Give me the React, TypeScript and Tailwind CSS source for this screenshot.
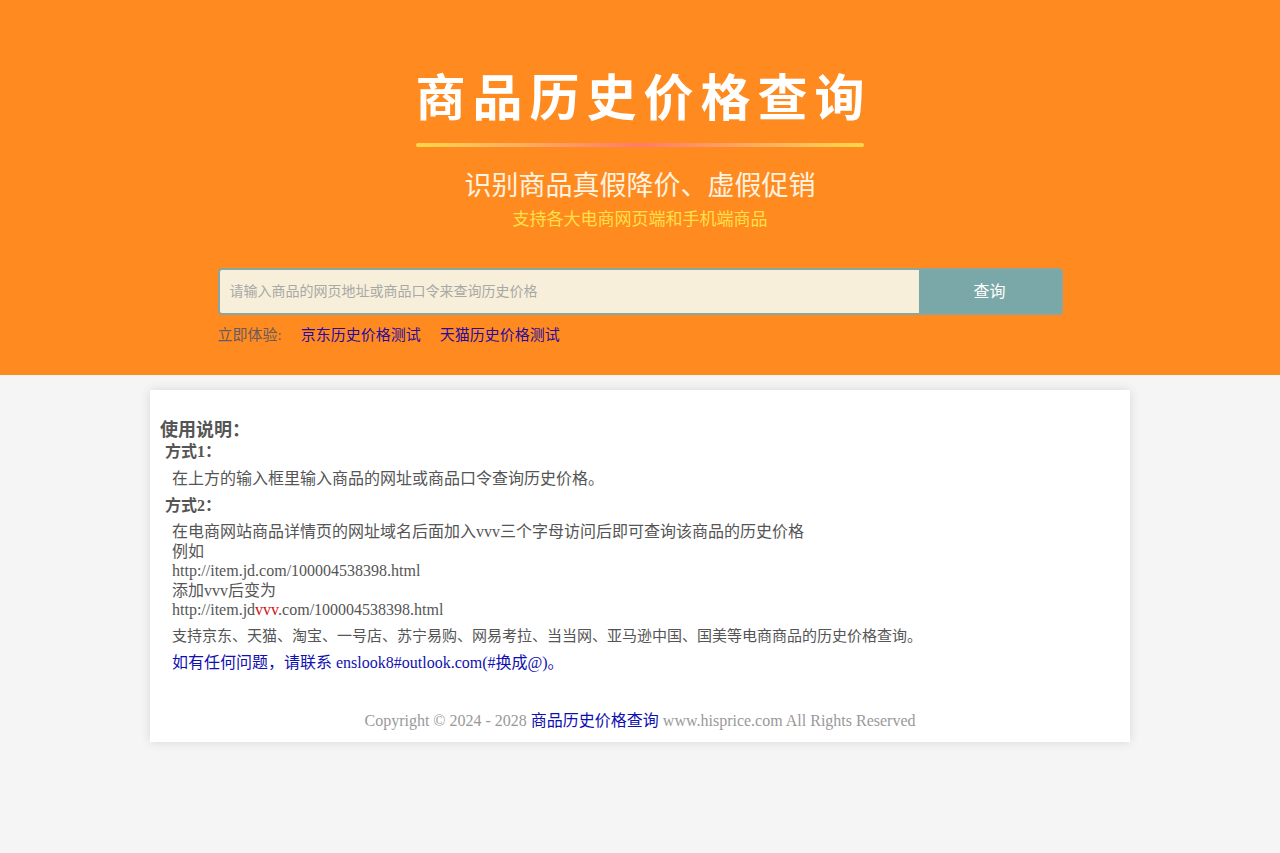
import React from 'react';

const font = { fontFamily: '"Liberation Serif", "Noto Sans CJK SC", serif' };

export default function App() {
  return (
    <div className="min-h-[853px] bg-[#f5f5f5]" style={font}>
      <header className="h-[375px] bg-[#ff8a1f] flex flex-col items-center pt-[66px]">
        <h1 className="text-[50px] leading-[66px] font-bold text-white tracking-[7px] pl-[7px]">商品历史价格查询</h1>
        <div className="w-[448px] h-[4px] mt-[11px] rounded bg-gradient-to-r from-[#ffd84a] via-[#ff7a6a] to-[#ffd84a]" />
        <p className="mt-[22px] text-[27px] leading-[34px] text-[#fff3e0]">识别商品真假降价、虚假促销</p>
        <p className="mt-[5px] text-[17px] leading-[24px] text-[#ffe04a]">支持各大电商网页端和手机端商品</p>
        <div className="mt-[36px] w-[845px] h-[47px] flex rounded-[4px] border-2 border-[#8aa6a0] overflow-hidden">
          <div className="flex-1 bg-[#f7efd9] flex items-center px-[10px] text-[14px] text-[#a8a8a8]">请输入商品的网页地址或商品口令来查询历史价格</div>
          <div className="w-[142px] bg-[#7aa8a8] flex items-center justify-center text-white text-[16px]">查询</div>
        </div>
        <div className="w-[845px] mt-[8px] flex gap-[19px] text-[15px] leading-[24px]">
          <span className="text-[#6a5a60] mr-[0px]">立即体验:</span>
          <span className="text-[#2a0aa0]">京东历史价格测试</span>
          <span className="text-[#2a0aa0]">天猫历史价格测试</span>
        </div>
      </header>
      <main className="mx-auto mt-[15px] w-[980px] bg-white shadow-[0_0_10px_rgba(0,0,0,0.12)] pt-[28px] pb-[10px] px-[10px] text-[#555]">
        <h2 className="text-[18px] font-bold leading-[24px]">使用说明：</h2>
        <h3 className="pl-[5px] text-[16px] font-bold leading-[20px]">方式1：</h3>
        <p className="pl-[12px] mt-[6px] text-[16px] leading-[22px]">在上方的输入框里输入商品的网址或商品口令查询历史价格。</p>
        <h3 className="pl-[5px] mt-[6px] text-[16px] font-bold leading-[20px]">方式2：</h3>
        <div className="pl-[12px] mt-[6px] text-[16px] leading-[19.5px]">
          <div>在电商网站商品详情页的网址域名后面加入vvv三个字母访问后即可查询该商品的历史价格</div>
          <div>例如</div>
          <div>http://item.jd.com/100004538398.html</div>
          <div>添加vvv后变为</div>
          <div>http://item.jd<span className="text-[#d01010]">vvv</span>.com/100004538398.html</div>
        </div>
        <p className="pl-[12px] mt-[6px] text-[15px] leading-[20px]">支持京东、天猫、淘宝、一号店、苏宁易购、网易考拉、当当网、亚马逊中国、国美等电商商品的历史价格查询。</p>
        <p className="pl-[12px] mt-[6px] text-[16px] leading-[22px] text-[#1010b0]">如有任何问题，请联系 enslook8#outlook.com(#换成@)。</p>
        <p className="mt-[36px] text-center text-[16px] leading-[22px] text-[#999]">Copyright © 2024 - 2028 <span className="text-[#1010b0]">商品历史价格查询</span> www.hisprice.com All Rights Reserved</p>
      </main>
    </div>
  );
}
